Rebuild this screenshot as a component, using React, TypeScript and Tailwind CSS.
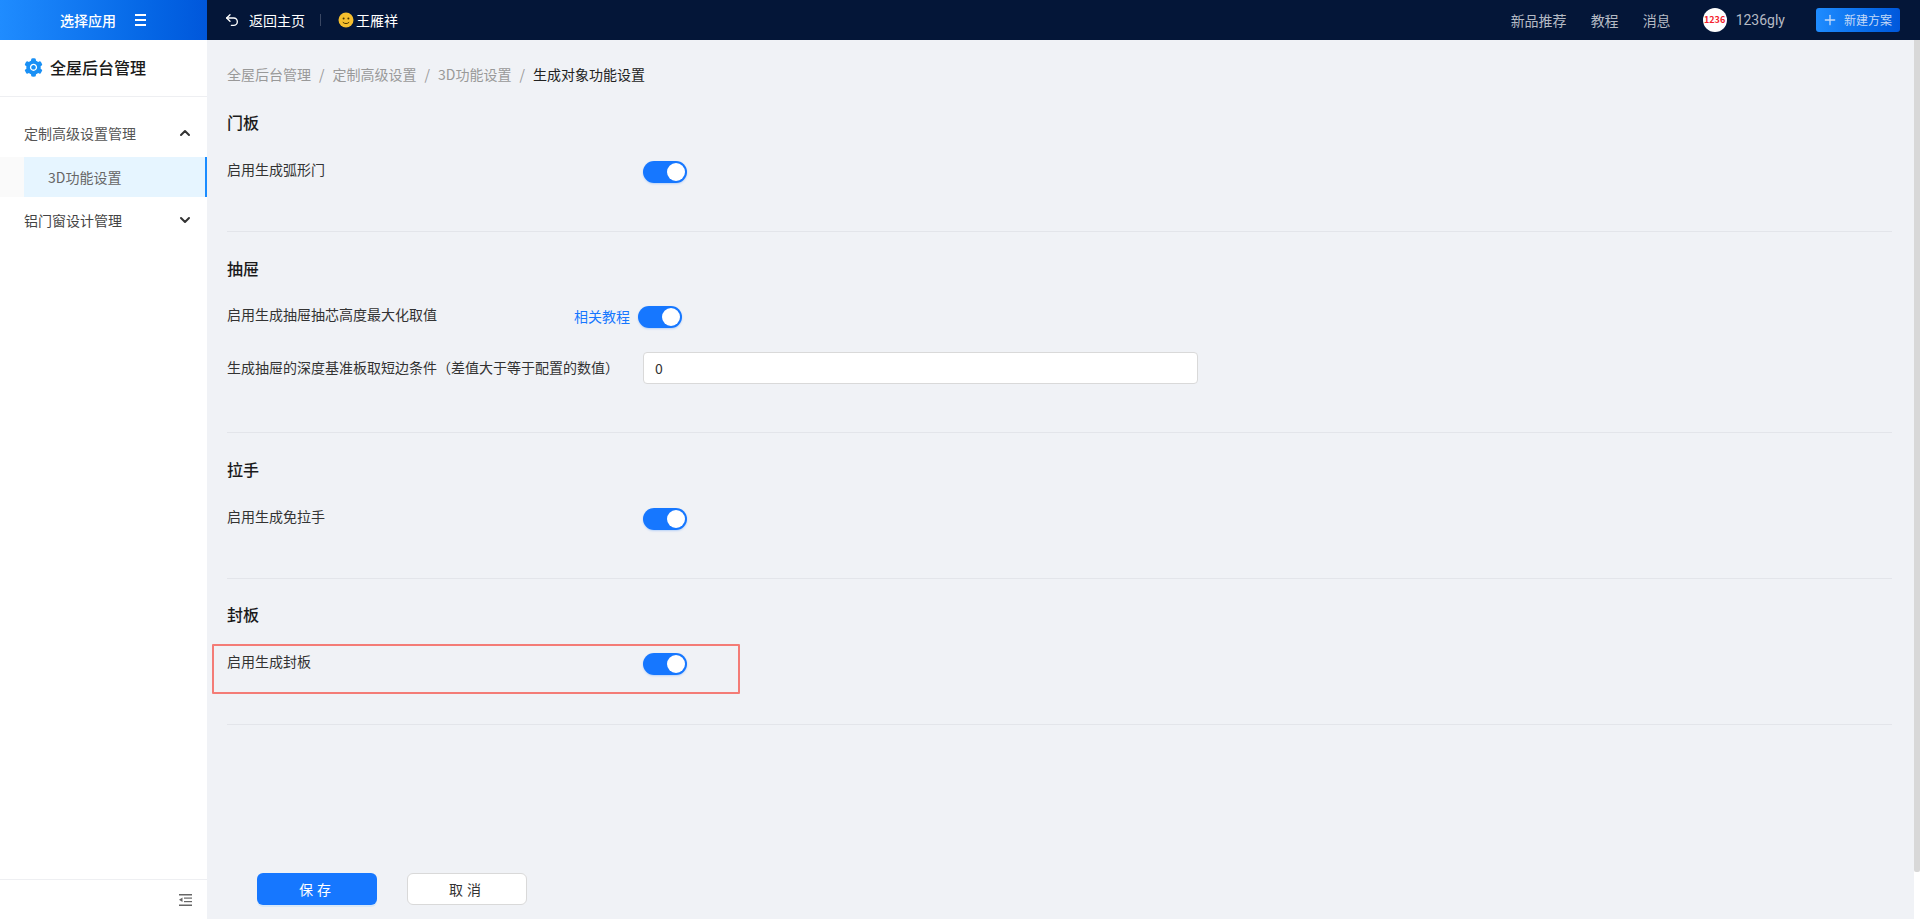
import React from "react";
import { ChevronDown, ChevronUp, Plus, Undo2 } from "lucide-react";
import { AiFillSetting } from "react-icons/ai";

const Toggle = () => (
  <div className="relative w-[44px] h-[22px] rounded-full bg-[#1677ff] shadow-[0_1px_2px_rgba(22,119,255,0.25)] shrink-0">
    <div className="absolute right-[2px] top-[2px] w-[18px] h-[18px] rounded-full bg-white"></div>
  </div>
);

const Row = ({ label, className }: { label: string; className?: string }) => (
  <div className={`flex h-[32px] text-sm text-[#333] ${className ?? ""}`}>
    <div className="w-[416px] leading-[16px] shrink-0">{label}</div>
    <Toggle />
  </div>
);

const Section = ({
  title,
  height,
  children,
}: {
  title: string;
  height: string;
  children: React.ReactNode;
}) => (
  <div className={`border-b border-[#e3e5ea] ${height}`}>
    <h2 className="text-base font-medium text-[#1a1a1a] leading-[22px] mb-[28px]">
      {title}
    </h2>
    {children}
  </div>
);

const App = () => {
  return (
    <div
      className="w-full h-[919px] flex flex-col overflow-hidden bg-[#f0f2f6]"
      style={{ fontFamily: '"Noto Sans CJK SC", "Noto Sans", sans-serif' }}
    >
      {/* top bar */}
      <header className="flex h-[40px] bg-[#041638] shrink-0 items-center text-sm">
        <div className="w-[207px] h-full bg-gradient-to-r from-[#1f8cff] to-[#0057db] flex items-center pl-[60px] shrink-0 text-white font-medium">
          <span>选择应用</span>
          <span className="ml-[19px] flex flex-col gap-[3px] w-[11px]">
            <span className="h-[2px] bg-white"></span>
            <span className="h-[2px] bg-white"></span>
            <span className="h-[2px] bg-white"></span>
          </span>
        </div>
        <div className="flex items-center pl-[17px] text-white">
          <Undo2 size={16} strokeWidth={2} />
          <span className="ml-[9px]">返回主页</span>
          <span className="w-px h-[12px] bg-[#3a4763] mx-[15px]"></span>
          <svg width="16" height="16" viewBox="0 0 16 16" className="ml-[2px]">
            <circle cx="8" cy="8" r="7.5" fill="#f5bf2e" />
            <circle cx="5.6" cy="6.4" r="1" fill="#4a3500" />
            <circle cx="10.4" cy="6.4" r="1" fill="#4a3500" />
            <path d="M4.8 10.2c1.6 1.8 4.8 1.8 6.4 0" stroke="#4a3500" strokeWidth="1" fill="none" />
          </svg>
          <span className="ml-[2px]">王雁祥</span>
        </div>
        <div className="ml-auto flex items-center text-[#b5bac4] pr-[20px]">
          <span className="ml-[1px]">新品推荐</span>
          <span className="ml-[24px]">教程</span>
          <span className="ml-[24px]">消息</span>
          <span className="ml-[32px] w-[24px] h-[24px] rounded-full bg-white flex items-center justify-center text-[9px] font-bold text-[#f5222d]">
            1236
          </span>
          <span className="ml-[9px]" style={{ fontFamily: '"Roboto", sans-serif' }}>1236gly</span>
          <button className="ml-[31px] h-[24px] w-[84px] rounded-[3px] bg-gradient-to-r from-[#1f8cff] to-[#0057db] flex items-center pl-[6px] text-xs text-[#c4d9f7]">
            <Plus size={16} strokeWidth={2} />
            <span className="ml-[6px]">新建方案</span>
          </button>
        </div>
      </header>

      <div className="flex flex-1 min-h-0">
        {/* sidebar */}
        <aside className="w-[207px] bg-white flex flex-col shrink-0">
          <div className="h-[57px] pb-[2px] border-b border-[#eeeff2] flex items-center pl-[23px] text-base font-medium text-[#1a1a1a] shrink-0">
            <AiFillSetting size={21} className="text-[#1a90f5]" />
            <span className="ml-[6px]">全屋后台管理</span>
          </div>
          <div className="pt-[20px] flex-1 text-sm text-[#555]">
            <div className="h-[31px] mb-[9px] flex items-center justify-between pl-[24px] pr-[14px]">
              <span>定制高级设置管理</span>
              <ChevronUp size={16} strokeWidth={3} className="text-[#333]" />
            </div>
            <div className="h-[40px] bg-[#fafafa] pl-[24px]">
              <div className="h-full pb-[1px] bg-[#e6f5ff] border-r-2 border-[#1a8cff] pl-[24px] flex items-center text-[#666]">
                3D功能设置
              </div>
            </div>
            <div className="h-[45px] flex items-center justify-between pl-[24px] pr-[14px] text-[#444]">
              <span>铝门窗设计管理</span>
              <ChevronDown size={16} strokeWidth={3} className="text-[#333]" />
            </div>
          </div>
          <div className="h-[40px] border-t border-[#eeeff2] flex items-center justify-end pr-[15px] shrink-0">
            <svg width="13" height="12" viewBox="0 0 13 12" fill="#666">
              <rect x="0" y="0" width="13" height="1.5" />
              <rect x="5" y="3.5" width="8" height="1.2" />
              <rect x="5" y="7" width="8" height="1.2" />
              <rect x="0" y="10.5" width="13" height="1.5" />
              <path d="M3.5 3.5v4.5L0 5.75z" />
            </svg>
          </div>
        </aside>

        {/* content */}
        <main className="relative flex-1 min-w-0 pl-[20px] pr-[28px] flex flex-col">
          <div className="flex items-center h-[20px] mt-[24px] text-sm text-[#999]">
            <span>全屋后台管理</span>
            <span className="mx-[8px]">/</span>
            <span>定制高级设置</span>
            <span className="mx-[8px]">/</span>
            <span>3D功能设置</span>
            <span className="mx-[8px]">/</span>
            <span className="text-[#222]">生成对象功能设置</span>
          </div>

          <div className="mt-[27px]">
            <Section title="门板" height="h-[121px]">
              <Row label="启用生成弧形门" />
            </Section>
            <div className="h-[25px]"></div>
            <Section title="抽屉" height="h-[176px]">
              <div className="flex h-[32px] -mt-[1px] text-sm text-[#333]">
                <div className="w-[347px] leading-[16px] shrink-0">启用生成抽屉抽芯高度最大化取值</div>
                <span className="text-[#1677ff] w-[64px] leading-[20px]">相关教程</span>
                <Toggle />
              </div>
              <div className="flex text-sm text-[#333] mt-[14px]">
                <div className="w-[416px] leading-[31px] shrink-0">
                  生成抽屉的深度基准板取短边条件（差值大于等于配置的数值）
                </div>
                <input
                  readOnly
                  value="0"
                  className="w-[555px] h-[32px] rounded-[4px] border border-[#d9d9d9] bg-white px-[11px] text-sm text-[#333] outline-none"
                />
              </div>
            </Section>
            <div className="h-[25px]"></div>
            <Section title="拉手" height="h-[121px]">
              <Row label="启用生成免拉手" />
            </Section>
            <div className="h-[24px]"></div>
            <Section title="封板" height="h-[122px]">
              <Row label="启用生成封板" className="mt-[1px]" />
            </Section>
          </div>

          {/* highlight box over the last row */}
          <div className="absolute left-[5px] top-[604px] w-[528px] h-[50px] border-2 border-[#f47c76] rounded-[1px] pointer-events-none"></div>

          <div className="mt-auto h-[46px] pl-[30px] flex gap-[30px] text-sm shrink-0">
            <button className="w-[120px] h-[32px] rounded-[6px] bg-[#1677ff] text-white tracking-[4px] shadow-[0_2px_0_rgba(5,145,255,0.1)]">
              保存
            </button>
            <button className="w-[120px] h-[32px] rounded-[6px] bg-white border border-[#d9d9d9] text-[#333] tracking-[4px]">
              取消
            </button>
          </div>

          {/* scrollbar */}
          <div className="absolute right-0 top-0 bottom-0 w-[6px] bg-white">
            <div className="h-[832px] bg-[#d8d8d8] rounded-b-[2px]"></div>
          </div>
        </main>
      </div>
    </div>
  );
};

export default App;
